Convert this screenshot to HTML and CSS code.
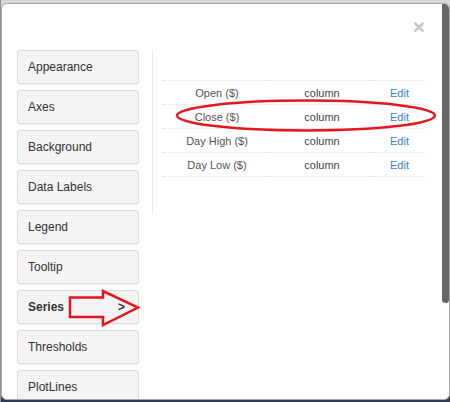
FILE: index.html
```html
<!DOCTYPE html>
<html>
<head>
<meta charset="utf-8">
<link rel="stylesheet" href="styles.css">
</head>
<body>
<div class="modal">
  <div class="modal-header">
    <span class="close">&times;</span>
  </div>
  <div class="modal-body">
    <div class="sidebar">
      <div class="nav-btn">Appearance</div>
      <div class="nav-btn">Axes</div>
      <div class="nav-btn">Background</div>
      <div class="nav-btn">Data Labels</div>
      <div class="nav-btn">Legend</div>
      <div class="nav-btn">Tooltip</div>
      <div class="nav-btn active"><span>Series</span><span>&gt;</span></div>
      <div class="nav-btn">Thresholds</div>
      <div class="nav-btn">PlotLines</div>
    </div>
    <div class="pane">
      <table class="series">
        <tr><td class="c-name">Open ($)</td><td class="c-type">column</td><td class="c-edit"><a>Edit</a></td></tr>
        <tr><td class="c-name">Close ($)</td><td class="c-type">column</td><td class="c-edit"><a>Edit</a></td></tr>
        <tr><td class="c-name">Day High ($)</td><td class="c-type">column</td><td class="c-edit"><a>Edit</a></td></tr>
        <tr><td class="c-name">Day Low ($)</td><td class="c-type">column</td><td class="c-edit"><a>Edit</a></td></tr>
      </table>
    </div>
  </div>
  <div class="scroll-thumb"></div>
</div>
<svg class="annot" width="450" height="402" viewBox="0 0 450 402">
  <ellipse cx="306" cy="115.5" rx="129" ry="15" fill="none" stroke="#e5161e" stroke-width="2.5"/>
  <polygon points="70,297.5 103,297.5 103,291 138,307.5 103,325 103,317 70,317" fill="none" stroke="#e5161e" stroke-width="2.5" stroke-linejoin="miter"/>
</svg>
</body>
</html>
```
FILE: styles.css
```css
html {
  background: linear-gradient(to bottom, #d6d6d6 0, #d6d6d6 396px, #6a5038 396px, #1f3550 402px);
}
body {
  margin: 0;
  padding: 3px 0 0 1px;
  height: 402px;
  box-sizing: border-box;
  overflow: hidden;
  font-family: "Liberation Sans", Arial, sans-serif;
  color: #333;
  position: relative;
  background: linear-gradient(to right, #8593a6 0, #8593a6 1px, transparent 1px);
}
.modal {
  position: relative;
  width: 449px;
  height: 397px;
  box-sizing: border-box;
  background: #fff;
  border: 1px solid #a8a8a8;
  border-radius: 6px;
  overflow: hidden;
}
.modal-header {
  height: 46px;
  display: flex;
  justify-content: flex-end;
  align-items: flex-start;
}
.close {
  font-size: 21px;
  font-weight: bold;
  line-height: 1;
  color: #c4c4c4;
  margin: 12px 24px 0 0;
}
.modal-body {
  display: flex;
  align-items: flex-start;
  padding-left: 15px;
}
.sidebar {
  width: 122px;
  display: flex;
  flex-direction: column;
  gap: 6px;
  margin-right: 13px;
}
.nav-btn {
  height: 34px;
  box-sizing: border-box;
  border: 1px solid #dcdcdc;
  border-radius: 3px;
  background: #f4f4f4;
  box-shadow: 0 1px 1px rgba(0,0,0,0.06);
  padding: 0 10px;
  line-height: 32px;
  font-size: 12px;
  color: #333;
  display: flex;
  justify-content: space-between;
  white-space: nowrap;
}
.nav-btn.active {
  font-weight: bold;
  padding-right: 13px;
}
.pane {
  border-left: 1px solid #ececec;
  padding: 30px 0 37px 10px;
}
.series {
  width: 263px;
  border-collapse: collapse;
  font-size: 11px;
}
.series td {
  height: 23px;
  padding: 0;
  text-align: center;
  border-top: 1px dotted #dedede;
  border-bottom: 1px dotted #dedede;
  vertical-align: middle;
}
.c-name { width: 108px; color: #555; }
.c-type { width: 102px; color: #444; }
.c-edit { width: 53px; }
.c-edit a { color: #3a7ec0; }
.scroll-thumb {
  position: absolute;
  top: -1px;
  right: 0;
  width: 7px;
  height: 300px;
  background: #666;
  border-radius: 0 4px 4px 4px;
}
.annot {
  position: absolute;
  left: 0;
  top: 0;
  pointer-events: none;
}
```
